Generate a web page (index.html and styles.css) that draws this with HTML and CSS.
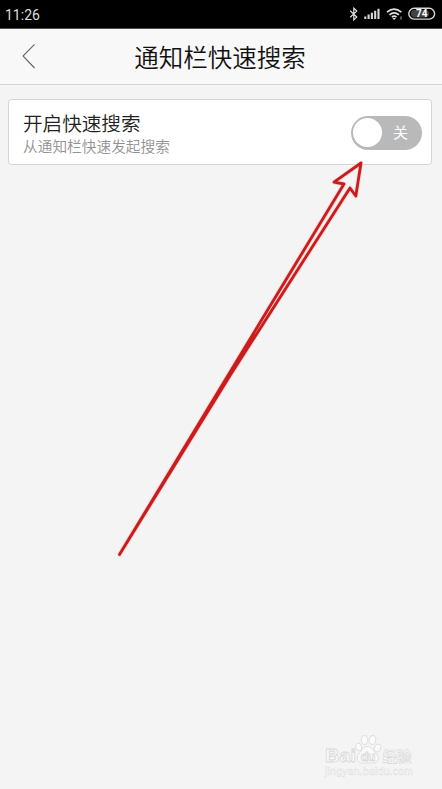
FILE: index.html
```html
<!DOCTYPE html>
<html lang="zh-CN">
<head>
<meta charset="utf-8">
<title>通知栏快速搜索</title>
<link rel="stylesheet" href="styles.css">
</head>
<body>
<div class="screen">
  <div class="status">
    <span class="time">11:26</span>
    <svg class="indicators" width="92" height="20" viewBox="345 4 92 20" fill="none">
      <path d="M350.2 10.8l6.6 6.2-3 2.9V8.2l3 2.9-6.6 6.2" stroke="#e0e0e0" stroke-width="1.2"/>
      <path d="M365.3 19v-2.6M368.6 19v-4.4M371.9 19v-6.2M375.2 19v-8.2M378.5 19V8.8" stroke="#d8d8d8" stroke-width="2.1"/>
      <path d="M387 12.2q7-6 14.4 0M389.5 14.8q4.6-4 9.4 0M391.9 17.2q2.2-2 4.6 0" stroke="#e0e0e0" stroke-width="1.7"/>
      <path d="M392.4 18h3.6l-1.8 2z" fill="#e0e0e0"/>
      <path d="M401 16.5v3" stroke="#aaa" stroke-width="1"/>
      <rect x="408.8" y="8.3" width="25.8" height="10.8" rx="5.4" stroke="#d8d8d8" stroke-width="1.4"/>
      <rect x="411" y="10" width="18" height="7.4" rx="3.6" fill="#444"/>
      <text class="battery" x="421.8" y="17.4" text-anchor="middle">74</text>
    </svg>
  </div>
  <header class="header">
    <svg class="back" width="14" height="26" viewBox="0 0 14 26" fill="none"><path d="M12.5 1.3L1 13l11.5 12" stroke="#666" stroke-width="1.1"/></svg>
    <h1 class="title">通知栏快速搜索</h1>
  </header>
  <main class="content">
    <section class="card">
      <div class="labels">
        <div class="name">开启快速搜索</div>
        <div class="hint">从通知栏快速发起搜索</div>
      </div>
      <div class="toggle"><span class="knob"></span><span class="state">关</span></div>
    </section>
  </main>
  <svg class="arrow" width="442" height="789" viewBox="0 0 442 789" fill="none" stroke-linejoin="round">
    <path class="halo" d="M119.500 554.500L344 184l-10-1.800L361 163l-5.200 33L350 188L231 374z"/>
    <path class="line" d="M119.500 554.500L344 184l-10-1.800L361 163l-5.200 33L350 188L231 374z"/>
  </svg>
  <svg class="watermark" width="100" height="46" viewBox="320 733 100 46">
    <g class="mark">
      <text class="brand" x="325" y="762" textLength="31" lengthAdjust="spacingAndGlyphs">Bai</text>
      <ellipse cx="358.7" cy="747" rx="2.9" ry="4" transform="rotate(-15 358.7 747)"/>
      <ellipse cx="364.6" cy="740" rx="3.2" ry="4.5"/>
      <ellipse cx="372.5" cy="740" rx="3.2" ry="4.5" transform="rotate(12 372.5 740)"/>
      <ellipse cx="377.6" cy="748" rx="3" ry="4.2" transform="rotate(20 377.6 748)"/>
      <path d="M367.5 746.5c-4 0-5 4-8 6.5s-3 9.500 2 10c3 .3 8-.3 12 0 5 .3 6-6 3-9s-5-7.500-9-7.500z"/>
      <text class="du" x="360.5" y="761" textLength="15">du</text>
      <text class="cn" x="382.5" y="761.5" textLength="29">经验</text>
    </g>
    <text class="url" x="325" y="774.5" textLength="88">jingyan.baidu.com</text>
  </svg>
</div>
</body>
</html>
```
FILE: styles.css
```css
* { box-sizing: border-box; }
body { margin: 0; font-family: Roboto, "Noto Sans CJK SC", sans-serif; }
.screen {
  position: relative;
  width: 442px;
  height: 789px;
  overflow: hidden;
  background: #f4f4f4;
  display: flex;
  flex-direction: column;
}
.status {
  height: 29px;
  background: #000;
  border-bottom: 1px solid #505050;
  padding: 0 5px;
  display: flex;
  align-items: center;
  justify-content: space-between;
}
.time { color: #ddd; font-size: 14px; line-height: 20px; padding-top: 2px; }
.battery { font-size: 10px; font-weight: 700; fill: #fff; }
.header {
  height: 56px;
  background: #f8f8f8;
  border-bottom: 1px solid #d6d6d6;
  display: grid;
  grid-template-columns: 50px 1fr 52px;
  align-items: center;
}
.back { margin-left: 22px; margin-top: -2px; }
.title {
  margin: 0;
  padding-top: 4px;
  text-align: center;
  font-size: 24.5px;
  line-height: 36px;
  font-weight: 350;
  color: #111;
}
.content { padding: 14px 10px 0 8px; }
.card {
  height: 66px;
  background: #fff;
  border: 1px solid #d5d5d5;
  border-radius: 4px;
  padding: 1px 9px 0 14px;
  display: flex;
  align-items: center;
  justify-content: space-between;
}
.labels { padding-top: 5px; }
.name { font-size: 19.6px; line-height: 25px; font-weight: 350; color: #222; }
.hint { font-size: 14.7px; line-height: 21px; font-weight: 350; color: #929292; }
.toggle {
  width: 71px;
  height: 34px;
  border-radius: 17px;
  background: #b9b9b9;
  padding: 0 14px 0 2px;
  display: flex;
  align-items: center;
  justify-content: space-between;
}
.knob { width: 29px; height: 29px; border-radius: 50%; background: #fff; }
.state { color: #fff; font-size: 15px; line-height: 20px; }
.arrow { position: absolute; left: 0; top: 0; }
.halo { stroke: #fbd5d0; stroke-width: 4.6; }
.line { stroke: #c91c1f; stroke-width: 2.8; }
.watermark { position: absolute; left: 320px; top: 733px; }
.mark { fill: #fafafa; stroke: #d8d8d8; stroke-width: 0.8; }
.brand { font: 700 19px "Liberation Sans", sans-serif; }
.du { font: 700 13px "Liberation Sans", sans-serif; }
.cn { font: 700 14.5px "Noto Sans CJK SC", sans-serif; stroke-width: 0.6; }
.url { font: 10.5px "Liberation Sans", sans-serif; fill: #fafafa; stroke: #dedede; stroke-width: 0.4; }
```
